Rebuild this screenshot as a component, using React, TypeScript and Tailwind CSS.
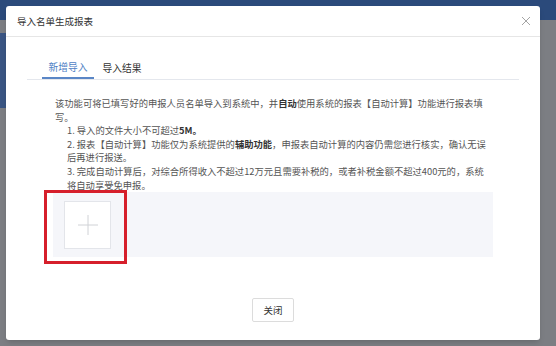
import React from "react";

const font = { fontFamily: '"Noto Sans CJK SC", "Noto Sans", sans-serif' };

const ImportModal: React.FC = () => {
  return (
    <div className="absolute left-[6px] top-[6px] w-[534px] h-[334px] bg-white rounded-[3px] shadow-md flex flex-col">
      {/* Header */}
      <div className="h-[31px] border-b border-[#e6e6e6] flex items-center justify-between pl-[11px] pr-[8px] shrink-0">
        <span className="text-[9.5px] text-[#333]">导入名单生成报表</span>
        <svg width="10" height="10" viewBox="0 0 10 10" className="mr-[1px]">
          <path d="M1 1 L9 9 M9 1 L1 9" stroke="#9a9a9a" strokeWidth="0.9" fill="none" />
        </svg>
      </div>

      {/* Body */}
      <div className="px-[21px] flex flex-col">
        <div className="mt-[18px] flex border-b border-[#e4e7ed] pl-[15px] gap-[2px]">
          <div className="w-[52px] h-[24px] pt-[3px] flex items-center justify-center border-b-2 border-[#5a86c6] -mb-px text-[9.75px] text-[#4f7fc4]">
            新增导入
          </div>
          <div className="w-[52px] h-[24px] pt-[3px] flex items-center justify-center text-[9.75px] text-[#333]">
            导入结果
          </div>
        </div>

        <div className="mt-[17px] ml-[28px] text-[9.3px] leading-[13.6px] text-[#555] whitespace-nowrap">
          <div>
            该功能可将已填写好的申报人员名单导入到系统中，并<b className="font-bold text-[#333]">自动</b>使用系统的报表【自动计算】功能进行报表填
          </div>
          <div>写。</div>
          <div className="pl-[12px]">
            1. 导入的文件大小不可超过<b className="font-bold text-[#333]">5M。</b>
          </div>
          <div className="pl-[12px]">
            2. 报表【自动计算】功能仅为系统提供的<b className="font-bold text-[#333]">辅助功能</b>，申报表自动计算的内容仍需您进行核实，确认无误
          </div>
          <div className="pl-[12px]">后再进行报送。</div>
          <div className="pl-[12px]">
            3. 完成自动计算后，对综合所得收入不超过12万元且需要补税的，或者补税金额不超过400元的，系统
          </div>
          <div className="pl-[12px]">将自动享受免申报。</div>
        </div>

        {/* Upload area */}
        <div className="ml-[26px] w-[440px] h-[65px] bg-[#f5f6fa] pl-[11px] pt-[9px]">
          <div className="w-[47px] h-[48px] bg-white border border-[#e3e5ea] flex items-center justify-center">
            <svg width="20" height="20" viewBox="0 0 20 20">
              <path d="M10 0 V20 M0 10 H20" stroke="#d0d2d6" strokeWidth="1" fill="none" />
            </svg>
          </div>
        </div>
      </div>

      {/* Footer */}
      <div className="mt-[41px] flex justify-center">
        <button
          className="w-[42px] h-[24px] border border-[#dcdcdc] rounded-[2px] bg-white text-[9.5px] text-[#333] flex items-center justify-center"
          style={font}
        >
          关闭
        </button>
      </div>

      {/* Annotation */}
      <div className="absolute left-[38px] top-[184px] w-[83px] h-[74px] border-[3px] border-[#d61f2b]" />
    </div>
  );
};

export default function App() {
  return (
    <div className="relative w-[556px] h-[346px] bg-[#7c7e83] overflow-hidden" style={font}>
      <div className="h-[20px] bg-[#2b4a7b]" />
      <div className="w-[6px] h-[75px] mt-[13px] bg-[#3a5583]" />
      <ImportModal />
    </div>
  );
}
